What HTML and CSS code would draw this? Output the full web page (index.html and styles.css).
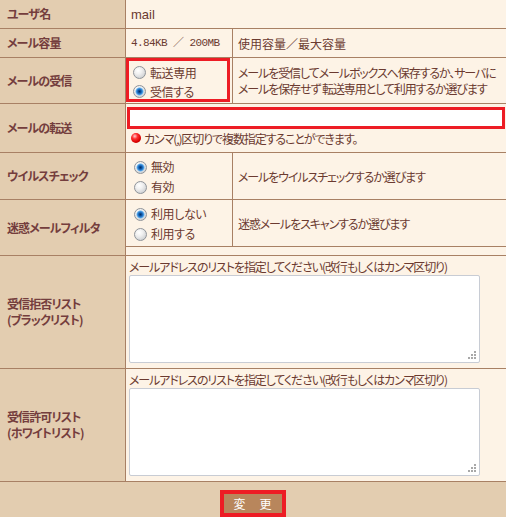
FILE: index.html
```html
<!DOCTYPE html>
<html lang="ja">
<head>
<meta charset="utf-8">
<title>メール設定</title>
<link rel="stylesheet" href="styles.css">
</head>
<body>
<form class="form">
  <div class="label">ユーザ名</div>
  <div class="value pad-a">mail</div>

  <div class="label">メール容量</div>
  <div class="value split">
    <div class="cell pad-a mono">4.84KB ／ 200MB</div>
    <div class="cell pad-b kanji">使用容量／最大容量</div>
  </div>

  <div class="label">メールの受信</div>
  <div class="value split">
    <div class="cell">
      <div class="redbox">
        <label class="opt tight"><input class="radio" type="radio" name="recv"><span>転送専用</span></label>
        <label class="opt tight"><input class="radio" type="radio" name="recv" checked><span>受信する</span></label>
      </div>
    </div>
    <div class="cell pad-b desc">メールを受信してメールボックスへ保存するか、サーバに<br>メールを保存せず&nbsp;転送専用として利用するか選びます</div>
  </div>

  <div class="label">メールの転送</div>
  <div class="value fwd">
    <input class="fwd-input" type="text">
    <div class="note"><span class="dot"></span><span>カンマ(,)区切りで複数指定することができます。</span></div>
  </div>

  <div class="label">ウイルスチェック</div>
  <div class="value split">
    <div class="cell group">
      <label class="opt"><input class="radio" type="radio" name="virus" checked><span>無効</span></label>
      <label class="opt"><input class="radio" type="radio" name="virus"><span>有効</span></label>
    </div>
    <div class="cell pad-b">メールをウイルスチェックするか選びます</div>
  </div>

  <div class="label">迷惑メールフィルタ</div>
  <div class="value spam">
    <div class="split spam-split">
      <div class="cell group">
        <label class="opt"><input class="radio" type="radio" name="spam" checked><span>利用しない</span></label>
        <label class="opt"><input class="radio" type="radio" name="spam"><span>利用する</span></label>
      </div>
      <div class="cell pad-b">迷惑メールをスキャンするか選びます</div>
    </div>
  </div>

  <div class="label two">受信拒否リスト<br>(ブラックリスト)</div>
  <div class="value list">
    <div class="caption">メールアドレスのリストを指定してください(改行もしくはカンマ区切り)</div>
    <textarea class="area"></textarea>
  </div>

  <div class="label two">受信許可リスト<br>(ホワイトリスト)</div>
  <div class="value list">
    <div class="caption">メールアドレスのリストを指定してください(改行もしくはカンマ区切り)</div>
    <textarea class="area"></textarea>
  </div>

  <div class="footer">
    <span class="btn-frame"><button class="btn" type="button">変　更</button></span>
  </div>
</form>
</body>
</html>
```

FILE: styles.css
```css
html, body {
  margin: 0;
  padding: 0;
  overflow: hidden;
  background: #fdf3e6;
}

.form {
  display: grid;
  grid-template-columns: 125px 1fr;
  grid-template-rows: 28px 28px 45px 48px 46px 55px 112px 112px 35px;
  gap: 1px;
  width: 506px;
  height: 517px;
  background: #a88064;
  font-family: "Noto Sans CJK JP", "Noto Sans", sans-serif;
  font-size: 12px;
  font-feature-settings: "palt";
  letter-spacing: -1.1px;
  color: #6b3a30;
}

.label {
  display: flex;
  align-items: center;
  padding-left: 7px;
  background: #e3cdb0;
  color: #743d3d;
  font-weight: 700;
  line-height: 14px;
  letter-spacing: -0.9px;
  white-space: nowrap;
}

.label.two {
  line-height: 16px;
}

.value {
  background: #fdf3e6;
  line-height: 15px;
  white-space: nowrap;
  min-width: 0;
}

.pad-a {
  display: flex;
  align-items: center;
  padding-left: 5px;
  font-family: "Liberation Sans", sans-serif;
  font-size: 13px;
  letter-spacing: 0;
  font-feature-settings: normal;
}

.split {
  display: grid;
  grid-template-columns: 106px 1fr;
  gap: 1px;
  background: #a88064;
}

.cell {
  background: #fdf3e6;
  min-width: 0;
}

.cell.mono {
  font-family: "Liberation Mono", "Noto Sans CJK JP", monospace;
  font-size: 11px;
  letter-spacing: -0.6px;
}

.pad-b {
  display: flex;
  align-items: center;
  padding-left: 5px;
}

.pad-b.kanji {
  letter-spacing: 0;
}

.desc {
  line-height: 16px;
  padding-top: 1px;
}

.redbox {
  box-sizing: border-box;
  width: 104px;
  height: 44px;
  border: 3px solid #ed1c24;
  padding: 2px 0 0 4px;
}

.opt {
  display: flex;
  align-items: center;
  height: 20px;
  line-height: 14px;
  letter-spacing: -0.4px;
}

.opt.tight {
  height: 19px;
}

.group {
  padding: 4px 0 0 8px;
}

.radio {
  appearance: none;
  -webkit-appearance: none;
  box-sizing: border-box;
  width: 13px;
  height: 13px;
  margin: 0 4px 0 0;
  border-radius: 50%;
  border: 1px solid #8f949a;
  background: radial-gradient(circle at 38% 32%, #ffffff 0, #f0f0f0 35%, #d2d4d6 75%, #b8babc 100%);
  flex: none;
}

.radio:checked {
  background:
    radial-gradient(circle at 50% 50%, #06305e 0, #0c55a8 1.5px, #3f93dd 3px, #8cc4f0 3.8px, rgba(140,196,240,0) 4.4px),
    radial-gradient(circle at 38% 32%, #ffffff 0, #f0f0f0 35%, #d2d4d6 75%, #b8babc 100%);
}

.fwd {
  padding: 3px 0 0 1px;
}

.fwd-input {
  display: block;
  box-sizing: border-box;
  width: 378px;
  height: 22px;
  margin: 0;
  border: 3px solid #ed1c24;
  background: #ffffff;
  padding: 0 3px;
  outline: none;
}

.note {
  display: flex;
  align-items: center;
  height: 14px;
  margin-top: 2px;
  padding-left: 4px;
}

.dot {
  display: inline-block;
  width: 10px;
  height: 10px;
  margin-right: 3px;
  border-radius: 50%;
  background: radial-gradient(circle at 38% 32%, #ffd0d0 0, #ff3030 30%, #d80000 65%, #8a0000 100%);
  flex: none;
}

.spam {
  display: flex;
  flex-direction: column;
}

.spam-split {
  height: 46px;
  border-bottom: 1px solid #a88064;
}

.list {
  padding: 3px 0 0 3px;
}

.caption {
  height: 16px;
  line-height: 16px;
}

.area {
  display: block;
  box-sizing: border-box;
  width: 351px;
  height: 88px;
  margin: 0;
  border: 1px solid #c8ccd4;
  border-radius: 2px;
  resize: none;
  background:
    linear-gradient(#a8a8a8, #a8a8a8) right 3px bottom 3px / 2px 2px no-repeat,
    linear-gradient(#a8a8a8, #a8a8a8) right 6px bottom 3px / 2px 2px no-repeat,
    linear-gradient(#a8a8a8, #a8a8a8) right 9px bottom 3px / 2px 2px no-repeat,
    linear-gradient(#a8a8a8, #a8a8a8) right 3px bottom 6px / 2px 2px no-repeat,
    linear-gradient(#a8a8a8, #a8a8a8) right 6px bottom 6px / 2px 2px no-repeat,
    linear-gradient(#a8a8a8, #a8a8a8) right 3px bottom 9px / 2px 2px no-repeat,
    #ffffff;
}

.footer {
  grid-column: 1 / -1;
  display: flex;
  justify-content: center;
  align-items: flex-start;
  padding: 8px 1px 0 0;
  background: #e3cdb0;
}

.btn-frame {
  display: block;
  border: 4px solid #ed1c24;
}

.btn {
  display: block;
  width: 58px;
  height: 19px;
  margin: 0;
  padding: 0;
  border: none;
  background: #b8865c;
  color: #ffffff;
  font-family: "Noto Sans CJK JP", sans-serif;
  font-size: 12px;
  line-height: 19px;
  letter-spacing: 1px;
  text-indent: 1px;
}
```
